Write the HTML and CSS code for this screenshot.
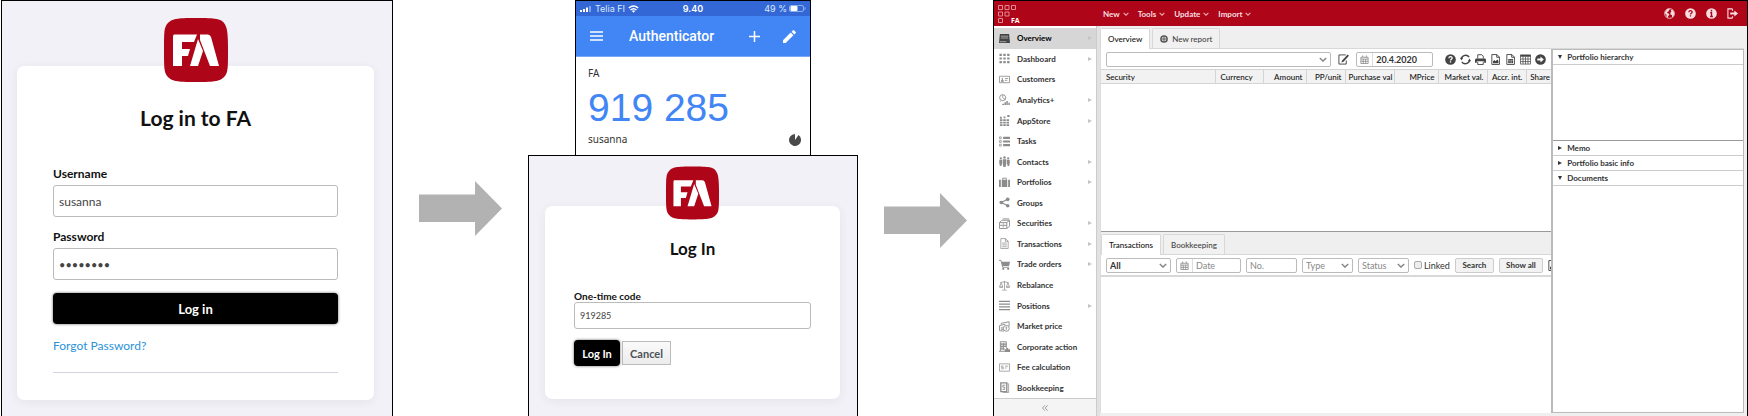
FILE: index.html
```html
<!DOCTYPE html>
<html lang="en">
<head>
<meta charset="utf-8">
<title>Log in to FA</title>
<link rel="stylesheet" href="styles.css">
</head>
<body>
<svg class="defs" aria-hidden="true">
  <symbol id="logo" viewBox="0 0 64 64"><path fill="#af0519" d="M32 0C52 0 57 1 60 5S64 14 64 32s0 23-4 27-8 5-28 5-24-1-28-5-4-9-4-27S0 9 4 5 12 0 32 0Z"/><path fill="#fff" d="M10 16.500H33L30 24H18V31H26L24 38H18V48H9V19Q9 16.500 10 16.500ZM36 16.500H44Q46 16.500 47 19L55 48H46L36 22ZM34 21L39 33L34 48H26Z"/></symbol>
  <symbol id="chev" viewBox="0 0 10 6"><path d="M1 1l4 4 4-4" fill="none" stroke="currentColor" stroke-width="1.800"/></symbol>
  <symbol id="cal" viewBox="0 0 10 10"><path d="M1 2.500h8v7H1zM1 4.500h8M1 7h8M3.600 4.500v5M6.300 4.500v5M3 .5v2M7 .5v2" fill="none" stroke="currentColor" stroke-width=".9"/></symbol>
  <symbol id="quest" viewBox="0 0 12 12"><circle cx="6" cy="6" r="5.800" fill="currentColor"/><path d="M4.200 4.600C4.300 2.400 7.900 2.500 7.800 4.500 7.700 5.700 6 5.600 6 7M6 8v1.400" fill="none" stroke="var(--hole)" stroke-width="1.400"/></symbol>
  <symbol id="pic" viewBox="0 0 12 12"><path d="M2 .6h5.500L10.300 3.400v8H2zM7.300.6v3h3" fill="none" stroke="currentColor"/><path d="M3.300 10V7.800l1.500-1.200L6 8l2-2 1.200 1.500V10z" fill="currentColor"/></symbol>
</svg>
<main class="flow">
  <section class="login frame">
    <svg class="logo"><use href="#logo"/></svg>
    <form class="card">
      <h1>Log in to FA</h1>
      <label for="user">Username</label>
      <input id="user" type="text" value="susanna">
      <label for="pass">Password</label>
      <input id="pass" type="password" value="password">
      <button class="primary" type="button">Log in</button>
      <a href="#forgot">Forgot Password?</a>
      <hr>
    </form>
  </section>

  <svg class="arrow" viewBox="0 0 83 55" aria-hidden="true"><path d="M0 13.500H56V0L83 27.500 56 55V41H0Z"/></svg>

  <div class="second">
    <section class="phone">
      <div class="status">
        <span class="carrier"><svg width="12" height="6" viewBox="0 0 12 6" fill="#fff"><path d="M0 4h2v2H0zM3 3h2v3H3z"/><path d="M6 1.500h2V6H6z"/><path opacity=".4" d="M9 0h2v6H9z"/></svg>Telia FI<svg width="11" height="8" viewBox="0 0 11 8"><path d="M.8 3Q5.500-1 10.200 3M2.500 5Q5.500 2.400 8.500 5" fill="none" stroke="#fff" stroke-width="1.400"/><path fill="#fff" d="M3.900 6q1.600-1.300 3.200 0L5.500 7.800z"/></svg></span>
        <strong>9.40</strong>
        <span class="battery">49 %<svg width="17" height="7" viewBox="0 0 17 7"><rect x=".5" y=".5" width="14" height="6" rx="1.500" fill="none" stroke="#8fb0ef"/><rect x="1.500" y="1" width="7" height="5" rx="1" fill="#fff"/><path d="M16 2.300v2.400" stroke="#8fb0ef"/></svg></span>
      </div>
      <div class="bar">
        <button type="button" aria-label="Menu"><svg width="13" height="10" viewBox="0 0 13 10"><path d="M0 1h13M0 5h13M0 9h13" stroke="#fff" stroke-width="1.500"/></svg></button>
        <span class="bar-title">Authenticator</span>
        <button type="button" aria-label="Add"><svg width="11" height="11" viewBox="0 0 11 11"><path d="M0 5.500h11M5.500 0v11" stroke="#fff" stroke-width="1.500"/></svg></button>
        <button type="button" aria-label="Edit"><svg width="13" height="13" viewBox="0 0 13 13" fill="#fff"><path d="M0 10.300L7.700 2.600l2.700 2.700L2.700 13H0zM8.600 1.700L10 .3q.5-.5 1 0L12.700 2q.5.5 0 1l-1.400 1.400z"/></svg></button>
      </div>
      <div class="token">
        <span>FA</span>
        <span class="code">919 285</span>
        <span class="who">susanna<svg width="12" height="12" viewBox="0 0 12 12"><path d="M6 6V0a6 6 0 1 0 3.500 1.100z" fill="#4a4a4a"/></svg></span>
      </div>
    </section>
    <section class="otp frame">
      <svg class="logo small"><use href="#logo"/></svg>
      <form class="card">
        <h2>Log In</h2>
        <label for="code">One-time code</label>
        <input id="code" type="text" value="919285">
        <div class="actions"><button class="primary" type="button">Log In</button><button class="plain" type="button">Cancel</button></div>
      </form>
    </section>
  </div>

  <svg class="arrow late" viewBox="0 0 83 55" aria-hidden="true"><path d="M0 13.500H56V0L83 27.500 56 55V41H0Z"/></svg>

  <section class="app frame">
    <header class="top">
      <svg class="brand" width="25" height="20" viewBox="0 0 25 20"><path d="M.5 1.500h4v4h-4zM7 1.500h4v4H7zM13.500 1.500h4v4h-4zM.5 8h4v4h-4zM7 8h4v4H7zM.5 14.500h4v4h-4z" fill="none" stroke="#e08a92"/><text x="13" y="19" class="brand-text">FA</text></svg>
      <nav class="menus">
        <button type="button">New<svg><use href="#chev"/></svg></button>
        <button type="button">Tools<svg><use href="#chev"/></svg></button>
        <button type="button">Update<svg><use href="#chev"/></svg></button>
        <button type="button">Import<svg><use href="#chev"/></svg></button>
      </nav>
      <div class="top-icons">
        <button type="button" aria-label="Language"><svg viewBox="0 0 12 12"><circle cx="6" cy="6" r="5.300" fill="none" stroke="#f7dfe1" stroke-width=".9"/><path fill="#f7dfe1" d="M1 4.500L3.500 1.200 6 .8 6.300 2 5 2.600 5.300 3.600 4 4.200 3.300 5.500 5.500 6.300 5.800 7.600 4.600 8.700 4.200 10.800 2.800 9.200 2.600 7.300 1.200 6zM7.500 2.200L9 1.800 11 4.500 11.200 7 9.800 9.500 9 10 8.600 7.600 7 7 6.900 5.300 8 4.300z"/></svg></button>
        <button type="button" aria-label="Help"><svg><use href="#quest"/></svg></button>
        <button type="button" aria-label="Info"><svg viewBox="0 0 12 12"><circle cx="6" cy="6" r="5.800" fill="#f7dfe1"/><path d="M6 2v1.700M4.600 5.200H6V9.400M4.500 9.300h3" stroke="#af0519" stroke-width="1.500" fill="none"/></svg></button>
        <button type="button" aria-label="Log out"><svg viewBox="0 0 12 12"><path d="M6 1H1v10h5M6 1v2M6 9v2" fill="none" stroke="#f7dfe1" stroke-width="1.200"/><path fill="#f7dfe1" d="M3.500 5H8V2.800L12 6 8 9.200V7H3.500z"/></svg></button>
      </div>
    </header>
    <div class="work">
      <aside class="side">
        <nav class="items">
          <a href="#o" class="on sub"><svg viewBox="0 0 12 12"><path d="M1 1h10l1 10H0z" fill="#444"/><path d="M2 3.500h8M2 5.500h8" stroke="#aaa"/><path d="M1 9.500h7" stroke="#ccc" stroke-width=".8"/></svg>Overview</a>
          <a href="#d" class="sub"><svg viewBox="0 0 12 12"><path d="M.5 2h11M.5 6h11M.5 10h11" stroke="currentColor" stroke-width="2.400" stroke-dasharray="2.600 1.600"/></svg>Dashboard</a>
          <a href="#c"><svg viewBox="0 0 12 12"><path d="M.5 2.500h11v7H.5zM6.500 5H10M6.500 7H9" fill="none" stroke="currentColor" stroke-width=".9"/><path d="M2 8.500q0-2 1.200-2Q2.500 4 3.600 4t.6 2.500q1.200 0 1.200 2z" fill="currentColor"/></svg>Customers</a>
          <a href="#an" class="sub"><svg viewBox="0 0 12 12"><circle cx="4" cy="4" r="3.300" fill="none" stroke="currentColor"/><path d="M4 4V1M4 4l3 2M1.500 7.500v1" stroke="currentColor" stroke-width=".8"/><path d="M3.500 10.500h2V12h-2zM6 9h1.600v3H6zM8 7.500h1.600V12H8zM10.200 9.500h1.600V12h-1.600z" fill="currentColor"/></svg>Analytics+</a>
          <a href="#ap" class="sub"><svg viewBox="0 0 12 12"><path d="M1 5.500h10M1 8.300h10M1 11h10" stroke="currentColor" stroke-width="2" stroke-dasharray="2.800 .8"/><path d="M1 2h2v2H1zM5 1.500h2v2H5zM9 0h2.500v2.200H9z" fill="currentColor"/></svg>AppStore</a>
          <a href="#t"><svg viewBox="0 0 12 12"><path d="M.5 1h2v2h-2zM.5 5h2v2h-2zM.5 9h2v2h-2z" fill="none" stroke="currentColor" stroke-width=".8"/><path d="M4.500 2H12M4.500 6H12M4.500 10H12" stroke="currentColor" stroke-width="2.400"/></svg>Tasks</a>
          <a href="#co" class="sub"><svg viewBox="0 0 12 12" fill="currentColor"><circle cx="2" cy="2.500" r="1.200"/><circle cx="6" cy="1.700" r="1.400"/><circle cx="10" cy="2.500" r="1.200"/><path d="M.3 4h3v4l-.7 3H1L.3 8zM4 3.600h4V8l-.8 4H4.800L4 8zM8.700 4h3v4l-.7 3H9.400l-.7-3z"/></svg>Contacts</a>
          <a href="#p" class="sub"><svg viewBox="0 0 12 12"><path d="M0 3h2v8H0zM3 3h6v8H3zM10 3h2v8h-2z" fill="currentColor"/><path d="M4 3V1.300h4V3" fill="none" stroke="currentColor"/></svg>Portfolios</a>
          <a href="#g"><svg viewBox="0 0 12 12"><path d="M9.500 2.500L2.500 6l7 3.500" fill="none" stroke="currentColor" stroke-width="1.200"/><g fill="currentColor"><circle cx="9.500" cy="2.500" r="2"/><circle cx="2.500" cy="6" r="2"/><circle cx="9.500" cy="9.500" r="2"/></g></svg>Groups</a>
          <a href="#s" class="sub"><svg viewBox="0 0 12 12"><path d="M.5 5h8v6.500h-8zM.5 5L3 2.500h8.500V9l-3 2.500M8.500 5l3-2.500M.5 8h8M4 6.500h1.500M4 9.700h1.500M4 1h7" fill="none" stroke="currentColor"/></svg>Securities</a>
          <a href="#tr" class="sub"><svg viewBox="0 0 12 12"><path d="M2 .6h5L10 3.500v8H2zM7 .6v3h3M3.500 5.500h5M3.500 7.500h5M3.500 9.500h5" fill="none" stroke="currentColor" stroke-width=".8"/></svg>Transactions</a>
          <a href="#to" class="sub"><svg viewBox="0 0 12 12"><path d="M0 1.500h2.200L4 9h7" fill="none" stroke="currentColor"/><path d="M2.700 3H12l-1 4.500H3.700z" fill="currentColor"/><circle cx="4.600" cy="10.700" r="1.200" fill="currentColor"/><circle cx="10" cy="10.700" r="1.200" fill="currentColor"/></svg>Trade orders</a>
          <a href="#r"><svg viewBox="0 0 12 12"><path d="M6 1v9.500M3.500 11h5M1.500 2.800L6 2l4.500.8M2.300 3L.6 7.500h3.600zM9.700 3L8 7.500h3.500zM.6 8h3.600M7.900 8h3.600" fill="none" stroke="currentColor" stroke-width=".8"/></svg>Rebalance</a>
          <a href="#po" class="sub"><svg viewBox="0 0 12 12"><path d="M0 1.500h12M0 4.500h12M0 7.500h12M0 10.500h12" stroke="currentColor" stroke-width="1.300"/></svg>Positions</a>
          <a href="#m"><svg viewBox="0 0 12 12"><path d="M2.500 4V2.500L11 .8v5M.5 5L7 3.500M.5 5v5.500l5 .5M2 7.500h3M2 9h3" fill="none" stroke="currentColor"/><circle cx="8" cy="8" r="3.200" fill="none" stroke="currentColor"/><path d="M8 6v4M7 7.500h2" stroke="currentColor" stroke-width=".8"/></svg>Market price</a>
          <a href="#ca"><svg viewBox="0 0 12 12"><path d="M1.500 11V.8H8V8M3.200 2v8M5 2v8M6.600 2v4M1.500 3.500H8M1.500 6H8M1.500 8.500H6M0 11.300h6" fill="none" stroke="currentColor"/><path d="M6 9h2V7.500h2V9h2v3H6z" fill="currentColor"/></svg>Corporate action</a>
          <a href="#f"><svg viewBox="0 0 12 12"><path d="M.5 2h11v8H.5zM6.500 4.500H10M6.500 6.500H8.500M4.800 4.400H2.700v1.400h2v1.600H2.500" fill="none" stroke="currentColor" stroke-width=".8"/></svg>Fee calculation</a>
          <a href="#b"><svg viewBox="0 0 12 12"><path d="M2 1h6.500v9.500H2z" fill="none" stroke="currentColor" stroke-width="1.500"/><path d="M9 2h1.500v9.500H4" fill="none" stroke="currentColor" stroke-width=".8"/><path d="M6.800 3.500H4.200v2.200h2v2.400H3.800" fill="none" stroke="currentColor"/></svg>Bookkeeping</a>
        </nav>
        <button class="fold" type="button" aria-label="Collapse menu"><svg width="6" height="6" viewBox="0 0 6 6"><path d="M3 .3L.5 3 3 5.700M5.700.3L3.200 3l2.500 2.700" fill="none" stroke="#888" stroke-width=".8"/></svg></button>
      </aside>
      <div class="body">
        <div class="tabs main-tabs"><button class="tab on" type="button">Overview</button><button class="tab" type="button"><svg width="8" height="8" viewBox="0 0 8 8"><circle cx="4" cy="4" r="3.100" fill="none" stroke="#555" stroke-width="1.500"/><path d="M4 2v4M2 4h4" stroke="#555"/></svg>New report</button></div>
        <div class="split">
          <div class="left">
            <div class="tools">
              <span class="pick grow"><select aria-label="Portfolio"><option></option></select><svg><use href="#chev"/></svg></span>
              <button class="icon edit" type="button" aria-label="Edit"><svg viewBox="0 0 12 12"><path d="M8.500 1H1v10h8V7" fill="none" stroke="currentColor"/><path d="M10.500.5l1.500 1.500L6 8.500l-2.200.7.7-2.200z" fill="currentColor"/></svg></button>
              <span class="date"><svg><use href="#cal"/></svg><input type="text" aria-label="Report date" value="20.4.2020"></span>
              <span class="report-icons">
                <button class="icon" type="button" aria-label="Help"><svg><use href="#quest"/></svg></button>
                <button class="icon" type="button" aria-label="Refresh"><svg viewBox="0 0 12 12"><path d="M1.500 5A4.700 4.700 0 0 1 10 3.500M10.500 7A4.700 4.700 0 0 1 2 8.500" fill="none" stroke="currentColor" stroke-width="1.500"/><path d="M0 4h3.500L1.500 7zM12 8H8.500l2-3z" fill="currentColor"/></svg></button>
                <button class="icon" type="button" aria-label="Print"><svg viewBox="0 0 12 12"><path d="M3 5V.8h4.500L9 2.300V5M3 8.500v3h6v-3" fill="none" stroke="currentColor"/><path d="M0 8.500V6.500Q0 5 1.500 5h9Q12 5 12 6.500v3h-2V8H2v1.500H0z" fill="currentColor"/></svg></button>
                <button class="icon" type="button" aria-label="Save as picture"><svg><use href="#pic"/></svg></button>
                <button class="icon" type="button" aria-label="Save as sheet"><svg viewBox="0 0 12 12"><path d="M2 .6h5.500L10.300 3.400v8H2zM7.300.6v3h3" fill="none" stroke="currentColor"/><path d="M3.500 5.500h5.300V10H3.500z" fill="currentColor"/><path d="M3.500 7h5.300M5.500 7v3M7 7v3" stroke="#fff" stroke-width=".4"/></svg></button>
                <button class="icon" type="button" aria-label="Table"><svg viewBox="0 0 12 12"><path d="M.5 1h11v10H.5zM.5 5.500h11M.5 8.300h11M3.300 3v8M6 3v8M8.700 3v8" fill="none" stroke="currentColor" stroke-width=".8"/><path d="M.5 1h11v2H.5z" fill="currentColor"/></svg></button>
                <button class="icon" type="button" aria-label="Go"><svg viewBox="0 0 12 12"><circle cx="6" cy="6" r="5.800" fill="currentColor"/><path d="M2.500 5H6V2.700L9.600 6 6 9.300V7H2.500z" fill="#fff"/></svg></button>
              </span>
            </div>
            <table>
              <colgroup><col class="c-sec"><col class="c-cur"><col class="c-amt"><col class="c-unit"><col class="c-buy"><col class="c-price"><col class="c-val"><col class="c-int"><col class="c-share"></colgroup>
              <thead><tr><th class="l">Security</th><th class="l">Currency</th><th>Amount</th><th>PP/unit</th><th>Purchase val</th><th>MPrice</th><th>Market val.</th><th>Accr. int.</th><th>Share</th></tr></thead>
            </table>
            <div class="rows"></div>
            <div class="tabs low-tabs"><button class="tab on" type="button">Transactions</button><button class="tab" type="button">Bookkeeping</button></div>
            <div class="filters">
              <span class="pick f-all dark"><select aria-label="Portfolios"><option>All</option></select><svg><use href="#chev"/></svg></span>
              <span class="date f-date"><svg><use href="#cal"/></svg><input type="text" aria-label="Date" placeholder="Date"></span>
              <input class="f-no" type="text" aria-label="Number" placeholder="No.">
              <span class="pick f-type"><select aria-label="Type"><option>Type</option></select><svg><use href="#chev"/></svg></span>
              <span class="pick f-type"><select aria-label="Status"><option>Status</option></select><svg><use href="#chev"/></svg></span>
              <label class="tick"><input type="checkbox">Linked</label>
              <button class="btn" type="button">Search</button>
              <button class="btn f-show" type="button">Show all</button>
              <button class="icon cut" type="button" aria-label="Export"><svg><use href="#pic"/></svg></button>
            </div>
            <div class="list"></div>
          </div>
          <div class="right">
            <button class="fold-head open" type="button">Portfolio hierarchy</button>
            <div class="tree"></div>
            <button class="fold-head" type="button">Memo</button>
            <button class="fold-head" type="button">Portfolio basic info</button>
            <button class="fold-head open" type="button">Documents</button>
          </div>
        </div>
      </div>
    </div>
  </section>
</main>
</body>
</html>
```

FILE: styles.css
```css
* { box-sizing: border-box; }
body { margin: 0; background: #fff; color: #111; font-family: Lato, "Open Sans", sans-serif; }
button, input, select { font: inherit; color: inherit; margin: 0; }
button { padding: 0; border: 0; background: none; display: flex; align-items: center; justify-content: center; }
svg { display: block; flex: none; }
.defs { display: none; }

.flow { display: grid; grid-template-columns: 392fr 83fr 330fr 83fr 755fr; column-gap: 26px; padding-left: 1px; min-height: 100vh; }
.frame { border: 1px solid #000; border-bottom: 0; }
.arrow { width: 100%; margin-top: 181px; fill: #b2b2b2; }
.arrow.late { margin-top: 193px; }

/* Sign-in dialogs */
.login, .otp { background: #f2f1f7; display: flex; flex-direction: column; align-items: center; }
.login { padding: 17px 18px 0 15px; }
.logo { width: 64px; height: 64px; position: relative; }
.card { width: 100%; display: flex; flex-direction: column; background: #fff; border-radius: 7px; box-shadow: 0 2px 10px rgba(60, 60, 100, .07); }
.login .card { margin-top: -16px; padding: 39px 36px 27px; }
.card h1, .card h2 { margin: 0; text-align: center; font-weight: 700; }
.card h1 { font-size: 21px; line-height: 26px; margin-bottom: 35px; }
.card label { font-weight: 700; font-size: 12px; line-height: 16px; margin-bottom: 3px; }
.card input { width: 100%; border: 1px solid #bbb; border-radius: 3px; background: #fff; color: #444; outline: 0; }
.login input { height: 32px; padding: 0 5px; font-size: 12px; margin-bottom: 12px; }
.login input[type="password"] { font-size: 11px; margin-bottom: 13px; }
.primary { background: #000; color: #fff; font-weight: 700; border-radius: 4px; box-shadow: 0 0 3px rgba(0, 0, 0, .6); }
.login .primary { height: 31px; font-size: 13px; }
.card a { color: #2b92d8; text-decoration: none; font-size: 12px; line-height: 16px; margin-top: 14px; align-self: flex-start; }
.card hr { width: 100%; margin: 18px 0 0; border: 0; border-top: 1px solid #d4d4de; }

.second { display: flex; flex-direction: column; }
.otp { flex: 1; padding: 10px 17px 0 16px; }
.logo.small { width: 53px; height: 54px; }
.otp .card { margin-top: -14px; padding: 31px 29px 33px; }
.card h2 { font-size: 17px; line-height: 24px; margin-bottom: 29px; }
.otp label { font-size: 10px; line-height: 12px; margin-bottom: 0; }
.otp input { height: 27px; padding: 0 5px; font-size: 9px; }
.actions { display: flex; gap: 2px; align-items: center; margin-top: 11px; font-size: 11px; font-weight: 700; }
.actions .primary { width: 46px; height: 26px; }
.plain { width: 49px; height: 24px; border: 1px solid #bbb; background: linear-gradient(#fafafa, #ececec); color: #4d5258; }

/* Phone */
.phone { margin: 0 47px; border: 1px solid #000; border-bottom: 0; font-family: "Liberation Sans", Arial, sans-serif; }
.status { background: #3367d6; color: #dde7fb; display: grid; grid-template-columns: 1fr auto 1fr; align-items: center; height: 15px; padding: 0 4px; font: 9px Inter, sans-serif; }
.status strong { font-weight: 600; color: #fff; }
.carrier, .battery { display: flex; align-items: center; gap: 3px; }
.battery { justify-content: flex-end; gap: 2px; }
.bar { background: #4285f4; color: #fff; height: 41px; display: flex; align-items: center; padding: 0 14px; border-bottom: 1px solid #78a8f8; }
.bar-title { font: 500 14px Roboto, sans-serif; flex: 1; margin-left: 26px; }
.bar button + button { margin-left: 23px; }
.token { display: flex; flex-direction: column; padding: 8px 9px 7px 12px; font: 10px "Noto Sans", sans-serif; color: #333; height: 98px; }
.token span { line-height: 16px; }
.token .code { font: 39px "Liberation Sans", Arial, sans-serif; line-height: 48px; color: #4285f4; margin: 3px 0 0; }
.token .who { display: flex; justify-content: space-between; align-items: flex-end; line-height: 14px; }

/* Portfolio application */
.app { display: flex; flex-direction: column; min-width: 0; font-size: 8px; font-weight: 700; color: #333; background: #efefef; }
.top { background: #af0519; height: 25px; display: flex; align-items: center; padding: 0 9px 0 4px; color: #f7dfe1; }
.brand-text { font: 700 7px "Open Sans", sans-serif; fill: #fff; }
.menus { display: flex; gap: 9px; margin-left: 80px; flex: 1; }
.menus svg { width: 6px; height: 4px; margin-left: 3px; color: #eba9af; }
.top-icons { display: flex; gap: 10px; --hole: #af0519; }
.top-icons svg { width: 11px; height: 11px; }
.work { flex: 1; display: flex; min-height: 0; }
.side { width: 103px; display: flex; flex-direction: column; background: #fff; border-right: 1px solid #ccc; }
.items { flex: 1; display: flex; flex-direction: column; padding-top: 2px; }
.items a { flex: 1; display: flex; align-items: center; gap: 7px; padding: 0 4px 0 5px; color: #333; text-decoration: none; }
.items svg { width: 11px; height: 11px; color: #8c8c8c; }
.items .on { background: #d6d6d6; color: #000; }
.sub::after { content: ""; margin-left: auto; border: 2px solid transparent; border-left: 4px solid #c4c4c4; border-right: 0; }
.fold { height: 18px; border-top: 1px solid #ccc; background: #f4f4f4; }
.body { flex: 1; min-width: 0; display: flex; flex-direction: column; padding: 2px 3px 3px 0; border-left: 3px solid #e2e2e2; }
.tabs { display: flex; gap: 2px; height: 21px; align-items: stretch; border-bottom: 1px solid #d8d8d8; background: #efefef; }
.tab { padding: 0 7px; gap: 4px; border: 1px solid #d8d8d8; border-bottom: 0; color: #444; border-radius: 2px 2px 0 0; background: #f1f1f1; font-weight: 500; }
.tab.on { background: #fff; color: #111; margin-bottom: -1px; }
.split { flex: 1; display: flex; min-height: 0; }
.left { flex: 453; min-width: 0; display: flex; flex-direction: column; background: #fff; overflow: hidden; border-left: 1px solid #ddd; }
.tools, .filters { display: flex; align-items: center; height: 20px; padding-left: 5px; font-size: 9px; flex: none; }
.pick { position: relative; display: flex; height: 15px; color: #888; }
.pick select { width: 100%; height: 100%; appearance: none; border: 1px solid #bbb; border-radius: 2px; background: #fff; padding: 0 3px; outline: 0; }
.pick svg { position: absolute; right: 4px; top: 5px; width: 8px; height: 5px; pointer-events: none; }
.pick.dark select { color: #333; }
.grow { flex: 1; }
.icon { color: #444; --hole: #fff; }
.icon svg { width: 11px; height: 11px; }
.edit { margin: 0 7px; }
.date { display: flex; align-items: center; width: 77px; height: 15px; border: 1px solid #bbb; border-radius: 2px; background: #fff; }
.date svg { width: 9px; height: 9px; margin: 0 3px; color: #888; }
.date input { flex: 1; min-width: 0; height: 100%; border: 0; border-left: 1px solid #ddd; background: none; padding: 0 3px; outline: 0; }
::placeholder { color: #888; opacity: 1; }
.report-icons { display: flex; gap: 4px; margin: 0 5px 0 12px; }
table { width: 100%; table-layout: fixed; border-collapse: collapse; font-size: 8px; }
th { height: 14px; padding: 0 3px; line-height: 10px; text-align: right; font-weight: 500; white-space: nowrap; background: #f2f2f2; border: 1px solid #d4d4d4; border-left: 0; color: #111; }
th:last-child { border-right: 0; }
th.l { text-align: left; padding-left: 5px; }
.c-sec { width: 114px; } .c-cur { width: 48px; } .c-amt { width: 43px; } .c-unit { width: 39px; } .c-buy { width: 49px; } .c-price { width: 44px; } .c-val { width: 49px; } .c-int { width: 39px; } .c-share { width: 27px; }
.rows { flex: 148; border-bottom: 1px solid #999; }
.low-tabs { height: 23px; padding-top: 2px; flex: none; }
.filters { height: 22px; border-bottom: 2px solid #d8d8d8; font-weight: 400; }
.filters > * { flex: none; }
.f-all { width: 65px; margin-right: 5px; }
.f-all select { font-weight: 700; }
.f-date { width: 65px; margin-right: 5px; }
.f-no { width: 51px; height: 15px; border: 1px solid #bbb; border-radius: 2px; padding: 0 3px; margin-right: 5px; outline: 0; }
.f-type { width: 51px; margin-right: 5px; }
.tick { display: flex; align-items: center; gap: 2px; margin-right: 5px; color: #333; }
.tick input { appearance: none; width: 8px; height: 8px; border: 1px solid #aaa; border-radius: 2px; background: #eee; }
.btn { width: 39px; height: 15px; border: 1px solid #ccc; border-radius: 2px; background: #f2f2f2; font-weight: 700; font-size: 8px; margin-right: 5px; }
.f-show { width: 44px; margin-right: 4px; }
.list { flex: 136; }
.right { flex: 191; min-width: 0; display: flex; flex-direction: column; background: #fff; border: 1px solid #bbb; border-left: 2px solid #bbb; }
.fold-head { height: 15px; justify-content: flex-start; gap: 4px; padding-left: 5px; border-bottom: 1px solid #ccc; font-weight: 700; flex: none; }
.fold-head::before { content: ""; margin-right: 1px; border: 2px solid transparent; border-left: 4px solid #333; border-right: 0; }
.fold-head.open::before { border: 2px solid transparent; border-top: 4px solid #333; border-bottom: 0; margin-right: 1px; }
.tree { height: 76px; border-bottom: 1px solid #999; flex: none; }
```
